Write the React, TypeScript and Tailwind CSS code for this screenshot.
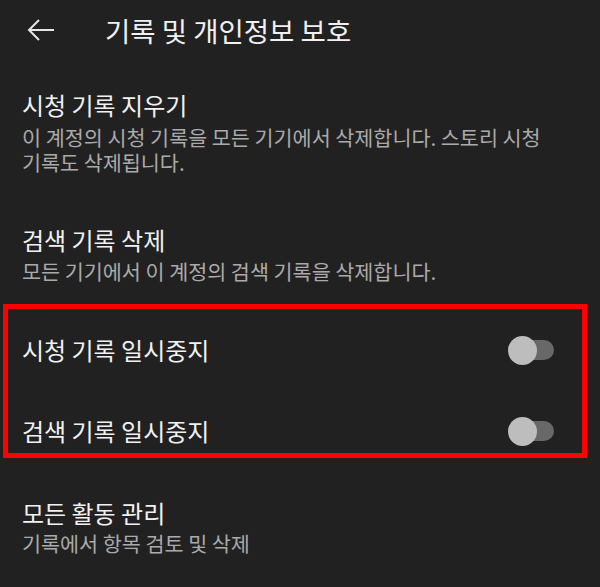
import React from 'react';

const font = { fontFamily: '"Noto Sans CJK KR", "Noto Sans", sans-serif' };

function Toggle() {
  return (
    <div className="relative w-[46px] h-[29px] flex items-center">
      <div className="absolute right-0 w-[40px] h-[20px] rounded-full bg-[#686868]" />
      <div className="absolute left-0 w-[29px] h-[29px] rounded-full bg-[#bdbdbd]" />
    </div>
  );
}

export default function App() {
  return (
    <div className="w-[600px] h-[587px] overflow-hidden bg-[#212121] font-['Noto_Sans_CJK_KR',sans-serif]" style={font}>
      <header className="h-[60px] flex items-center">
        <svg className="ml-[27px] w-[28px] h-[24px]" viewBox="0 0 28 24" fill="none" stroke="#e6e6e6" strokeWidth="2">
          <path d="M27 12H2M12 2L2 12l10 10" />
        </svg>
        <h1 className="ml-[50px] text-[27.5px] leading-[36px] text-[#f1f1f1]">기록 및 개인정보 보호</h1>
      </header>

      <section className="px-[22px] pt-[29px]">
        <h2 className="text-[24px] leading-[32px] text-[#f1f1f1]">시청 기록 지우기</h2>
        <p className="mt-[4px] text-[20.7px] leading-[25px] text-[#aaaaaa] whitespace-nowrap">
          이 계정의 시청 기록을 모든 기기에서 삭제합니다. 스토리 시청
          <br />
          기록도 삭제됩니다.
        </p>
      </section>

      <section className="px-[22px] mt-[49px]">
        <h2 className="text-[24px] leading-[32px] text-[#f1f1f1]">검색 기록 삭제</h2>
        <p className="mt-[3px] text-[20.7px] leading-[25px] text-[#aaaaaa]">모든 기기에서 이 계정의 검색 기록을 삭제합니다.</p>
      </section>

      <div className="mt-[20px] ml-[3px] w-[584px] h-[154px] border-[5px] border-[#ff0000] pt-[21px] flex flex-col gap-[41px]">
        <div className="h-[40px] flex items-center justify-between pl-[14px] pr-[28px]">
          <span className="text-[24px] text-[#f1f1f1]">시청 기록 일시중지</span>
          <Toggle />
        </div>
        <div className="h-[40px] flex items-center justify-between pl-[14px] pr-[28px]">
          <span className="text-[24px] text-[#f1f1f1]">검색 기록 일시중지</span>
          <Toggle />
        </div>
      </div>

      <section className="px-[22px] mt-[39px]">
        <h2 className="text-[24px] leading-[32px] text-[#f1f1f1]">모든 활동 관리</h2>
        <p className="mt-[2px] text-[20.7px] leading-[25px] text-[#aaaaaa]">기록에서 항목 검토 및 삭제</p>
      </section>
    </div>
  );
}
